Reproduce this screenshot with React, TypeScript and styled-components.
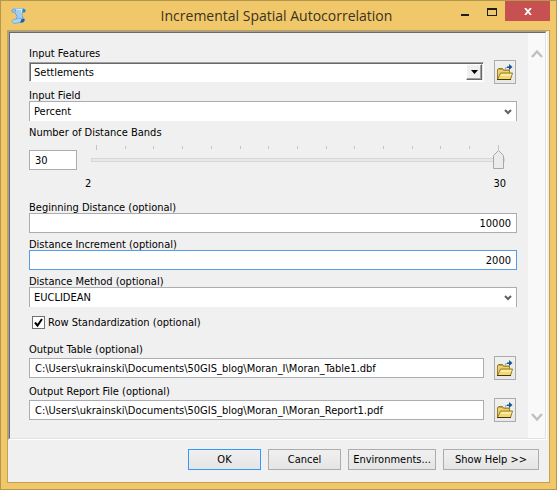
import React, { useState } from "react";
import styled, { createGlobalStyle, css } from "styled-components";

const GlobalStyle = createGlobalStyle`
  * { box-sizing: border-box; }
  body { margin: 0; background: #f0c869; }
  body, button, input, select {
    font-family: "DejaVu Sans Condensed", Tahoma, sans-serif;
    font-size: 11px;
    color: #000;
  }
`;

const Window = styled.main`
  display: flex;
  flex-direction: column;
  min-height: 100vh;
  padding: 0 6px 6px;
  border: 1px solid #b5984f;
  background: #f0c869;
`;

const TitleBar = styled.header`
  display: grid;
  grid-template-columns: 96px 1fr 100px;
  align-items: start;
  height: 29px;
`;

const AppIcon = styled.svg`
  width: 16px;
  height: 16px;
  margin: 7px 0 0 4px;
`;

const Title = styled.h1`
  margin: 0;
  padding-top: 5px;
  font-family: "Open Sans", "Noto Sans", sans-serif;
  font-size: 14px;
  font-weight: 400;
  line-height: 20px;
  text-align: center;
  white-space: nowrap;
  color: #3b3222;
`;

const WindowButtons = styled.div`
  display: flex;
  justify-content: flex-end;
`;

const WindowButton = styled.button<{ $close?: boolean }>`
  display: flex;
  align-items: center;
  justify-content: center;
  width: ${(p) => (p.$close ? "45px" : "27px")};
  height: 20px;
  padding: 1px 0 0;
  border: 0;
  background: ${(p) => (p.$close ? "#c75050" : "transparent")};
`;

const Client = styled.form`
  display: flex;
  flex: 1;
  flex-direction: column;
  border: 1px solid #c3a14f;
  background: #f0f0f0;
`;

const Panel = styled.section`
  display: flex;
  flex: 1;
  margin-right: 2px;
  border: 1px solid;
  border-color: #a0a0a0 #fff #fff #a0a0a0;
`;

const PanelInner = styled.div`
  display: flex;
  flex: 1;
  min-width: 0;
  border: 1px solid;
  border-color: #696969 #e3e3e3 #e3e3e3 #696969;
`;

const Fields = styled.div`
  display: flex;
  flex: 1;
  flex-direction: column;
  gap: 5px;
  min-width: 0;
  padding: 14px 11px 14px 19px;
`;

const ScrollBar = styled.div`
  display: flex;
  flex-direction: column;
  justify-content: space-between;
  width: 17px;
  padding: 16px 0;
  background: #f9f9f9;
`;

const ScrollButton = styled.button`
  display: flex;
  justify-content: center;
  padding: 0;
  border: 0;
  background: none;
`;

const Field = styled.div`
  display: flex;
  flex-direction: column;
`;

const Label = styled.label`
  height: 12px;
  line-height: 14px;
  white-space: nowrap;
`;

const BrowseRow = styled.div`
  display: flex;
  align-items: center;
  gap: 10px;
  height: 24px;
  margin-top: 1px;
`;

const BrowseButton = styled.button`
  display: flex;
  align-items: center;
  justify-content: center;
  width: 22px;
  height: 24px;
  margin-right: 1px;
  padding: 0;
  border: 1px solid #acacac;
  background: linear-gradient(#f0f0f0, #e8e8e8);
`;

const TextBox = styled.input<{ $number?: boolean; $active?: boolean }>`
  flex: 1 0 auto;
  min-width: 0;
  height: 20px;
  padding: 0 5px;
  border: 1px solid ${(p) => (p.$active ? "#569de5" : "#abadb3")};
  border-radius: 0;
  outline: 0;
  background: #fff;
  text-align: ${(p) => (p.$number ? "right" : "left")};
`;

const SelectFrame = styled.div<{ $sunken?: boolean }>`
  position: relative;
  flex: 1;
  height: 20px;
  background: #fff;
  ${(p) =>
    p.$sunken
      ? css`
          border: 1px solid;
          border-color: #a0a0a0 #fff #fff #a0a0a0;
          box-shadow: inset 1px 1px #696969, inset -1px 0 #e3e3e3;
        `
      : css`
          flex: none;
          border: solid #abadb3;
          border-width: 1px 1px 0;
        `}
`;

const Select = styled.select`
  display: block;
  width: 100%;
  height: 100%;
  padding: 0 20px 0 4px;
  border: 0;
  outline: 0;
  background: transparent;
  appearance: none;
`;

const RaisedArrow = styled.span`
  position: absolute;
  top: 1px;
  right: 1px;
  bottom: 1px;
  display: flex;
  align-items: center;
  justify-content: center;
  width: 16px;
  border: 1px solid;
  border-color: #fff #696969 #696969 #fff;
  box-shadow: inset -1px -1px #a0a0a0;
  background: #f0f0f0;
  pointer-events: none;
`;

const FlatArrow = styled.span`
  position: absolute;
  top: 0;
  right: 4px;
  bottom: 0;
  display: flex;
  align-items: center;
  pointer-events: none;
`;

const SliderRow = styled.div`
  display: flex;
  align-items: flex-start;
  gap: 8px;
  height: 58px;
`;

const BandCount = styled.input`
  width: 48px;
  height: 20px;
  margin-top: 12px;
  padding: 0 5px;
  border: 1px solid #abadb3;
  border-radius: 0;
  background: #fff;
`;

const Slider = styled.div`
  display: flex;
  flex: 1;
  flex-direction: column;
  padding: 7px 12px 0 0;
`;

const Ticks = styled.div`
  display: flex;
  align-items: center;
  justify-content: space-between;
  height: 5px;
  margin: 0 6px 0 11px;
`;

const Tick = styled.span<{ $end: boolean }>`
  width: 1px;
  height: ${(p) => (p.$end ? "5px" : "3px")};
  background: #c4c4c4;
`;

const thumbImage = `url("data:image/svg+xml,%3Csvg xmlns='http://www.w3.org/2000/svg' width='11' height='19'%3E%3Cpath d='M.5 5.5l5-5 5 5v13H.5z' fill='%23ebebeb' stroke='%23a8a8a8'/%3E%3C/svg%3E")`;

const Range = styled.input`
  height: 19px;
  margin: 0 0 0 6px;
  outline: 0;
  background: transparent;
  appearance: none;
  &::-webkit-slider-runnable-track {
    height: 4px;
    border: 1px solid #d6d6d6;
    background: #e7eaea;
  }
  &::-webkit-slider-thumb {
    width: 11px;
    height: 19px;
    margin-top: -9px;
    border: 0;
    appearance: none;
    background: ${thumbImage};
  }
`;

const Limits = styled.div`
  display: flex;
  justify-content: space-between;
  margin-top: 8px;
  margin-right: -1px;
  line-height: 14px;
`;

const CheckRow = styled.label`
  display: flex;
  align-items: center;
  gap: 3px;
  height: 13px;
  margin: 4px 0 9px 3px;
  line-height: 14px;
`;

const CheckFrame = styled.span`
  display: grid;
  width: 13px;
  height: 13px;
  > * { grid-area: 1 / 1; }
  > svg { pointer-events: none; }
  input:not(:checked) + svg { visibility: hidden; }
`;

const CheckBox = styled.input`
  width: 13px;
  height: 13px;
  margin: 0;
  border: 1px solid #707070;
  background: #fff;
  appearance: none;
`;

const Footer = styled.footer`
  display: flex;
  justify-content: flex-end;
  gap: 7px;
  padding: 9px 10px 12px;
`;

const Button = styled.button<{ $primary?: boolean }>`
  min-width: 73px;
  height: 21px;
  padding: 0 3px;
  border: 1px solid ${(p) => (p.$primary ? "#3399ff" : "#acacac")};
  background: linear-gradient(#f0f0f0, #e5e5e5);
  white-space: nowrap;
`;

const WideButton = styled(Button)`
  min-width: 88px;
`;

const HelpButton = styled(Button)`
  min-width: 96px;
`;

const ScriptIcon = () => (
  <AppIcon viewBox="0 0 16 16" aria-hidden="true">
    <path d="M2.500.5H13L11 4v4l1.500 5-8 1.500L5.500 9 4 4.500H2.500z" fill="#d9edfc" />
    <path d="M2.500 1C0 1 .3 4.600 2.500 4.500L4.500 4V1.500z" fill="#8fc3ef" stroke="#5a9ad6" strokeWidth=".7" />
    <path d="M3 .6h9.500" stroke="#8fc0ea" />
    <path d="M12 .5c3 0 3.500 4 1 4h-1.800c0-2 .2-3 .8-4z" fill="#2f7fca" />
    <path d="M5 3h5M5 5h5M5.500 7h4.500M6 9h4.500" stroke="#6fa9dc" />
    <path d="M4 4.500L6 8.500 5 12M11 4.500V8l1.500 3" fill="none" stroke="#4a8dcc" strokeWidth=".8" />
    <path d="M2.500 11.500L11 10c3-.5 3.500 3 1 4l-8 1.400C.8 15.500.3 12 2.500 11.500z" fill="#aad4f5" stroke="#5b9cd8" strokeWidth=".7" />
    <path d="M10.500 11c3.500-1.500 4 2 1.500 3.200l-3 .6z" fill="#1b62ab" />
  </AppIcon>
);

const FolderIcon = () => (
  <svg width="18" height="18" viewBox="0 0 18 18" aria-hidden="true">
    <path d="M1.500 16.500V6.500l1-1h4l1 1.500h6v3" fill="#c9a63a" stroke="#9b7d1c" />
    <path d="M2 15V7h4.500l1 1H13v2H5z" fill="#ead17b" />
    <path d="M1.500 16.500l3-6.500h12l-2 6.500z" fill="#f2d875" stroke="#9b7d1c" />
    <path d="M5.500 11h10l-.6 2H4.600z" fill="#f9eca6" />
    <path d="M1 16.500h14" stroke="#4a360b" />
    <path d="M9.500 6.500V4.500h2" fill="none" stroke="#8fb0cb" />
    <path d="M11 3.500h2V1l3.500 3-3.500 3V5h-2z" fill="#15558f" />
  </svg>
);

const Chevron = () => (
  <svg width="8" height="6" viewBox="0 0 8 6" aria-hidden="true">
    <path d="M1 1l3 3 3-3" fill="none" stroke="#606060" strokeWidth="2" />
  </svg>
);

const Browse = ({ label }: { label: string }) => (
  <BrowseButton type="button" aria-label={label}>
    <FolderIcon />
  </BrowseButton>
);

const PathField = ({ id, label, value }: { id: string; label: string; value: string }) => (
  <Field>
    <Label htmlFor={id}>{label}</Label>
    <BrowseRow>
      <TextBox id={id} defaultValue={value} />
      <Browse label={`Browse ${label}`} />
    </BrowseRow>
  </Field>
);

const NumberField = ({ id, label, value, active }: { id: string; label: string; value: string; active?: boolean }) => (
  <Field>
    <Label htmlFor={id}>{label}</Label>
    <TextBox id={id} defaultValue={value} $number $active={active} />
  </Field>
);

const SelectField = ({ id, label, value }: { id: string; label: string; value: string }) => (
  <Field>
    <Label htmlFor={id}>{label}</Label>
    <SelectFrame>
      <Select id={id}>
        <option>{value}</option>
      </Select>
      <FlatArrow>
        <Chevron />
      </FlatArrow>
    </SelectFrame>
  </Field>
);

const tickCount = 15;

export default function App() {
  const [bands, setBands] = useState("30");
  return (
    <>
      <GlobalStyle />
      <Window>
        <TitleBar>
          <ScriptIcon />
          <Title>Incremental Spatial Autocorrelation</Title>
          <WindowButtons>
            <WindowButton type="button" aria-label="Minimize">
              <svg width="8" height="10" aria-hidden="true">
                <path d="M0 7h8v2H0z" fill="#1e1e1e" />
              </svg>
            </WindowButton>
            <WindowButton type="button" aria-label="Maximize">
              <svg width="10" height="8" aria-hidden="true">
                <path d="M0 0h10v8H0zM1 2v5h8V2z" fill="#1e1e1e" fillRule="evenodd" />
              </svg>
            </WindowButton>
            <WindowButton type="button" aria-label="Close" $close>
              <svg width="8" height="7" viewBox="0 0 8 7" aria-hidden="true">
                <path d="M1 0l6 7M7 0L1 7" stroke="#fff" strokeWidth="1.800" />
              </svg>
            </WindowButton>
          </WindowButtons>
        </TitleBar>
        <Client onSubmit={(e) => e.preventDefault()}>
          <Panel>
            <PanelInner>
              <Fields>
                <Field>
                  <Label htmlFor="features">Input Features</Label>
                  <BrowseRow>
                    <SelectFrame $sunken>
                      <Select id="features">
                        <option>Settlements</option>
                      </Select>
                      <RaisedArrow>
                        <svg width="7" height="4" aria-hidden="true">
                          <path d="M0 0h7L3.500 4z" />
                        </svg>
                      </RaisedArrow>
                    </SelectFrame>
                    <Browse label="Browse Input Features" />
                  </BrowseRow>
                </Field>
                <SelectField id="field" label="Input Field" value="Percent" />
                <Field>
                  <Label htmlFor="bands">Number of Distance Bands</Label>
                  <SliderRow>
                    <BandCount id="bands" value={bands} onChange={(e) => setBands(e.target.value)} />
                    <Slider>
                      <Ticks>
                        {Array.from({ length: tickCount }, (_, i) => (
                          <Tick key={i} $end={i === 0 || i === tickCount - 1} />
                        ))}
                      </Ticks>
                      <Range
                        type="range"
                        min={2}
                        max={30}
                        value={bands}
                        aria-label="Number of Distance Bands"
                        onChange={(e) => setBands(e.target.value)}
                      />
                      <Limits>
                        <span>2</span>
                        <span>30</span>
                      </Limits>
                    </Slider>
                  </SliderRow>
                </Field>
                <NumberField id="beginning" label="Beginning Distance (optional)" value="10000" />
                <NumberField id="increment" label="Distance Increment (optional)" value="2000" active />
                <SelectField id="method" label="Distance Method (optional)" value="EUCLIDEAN" />
                <CheckRow>
                  <CheckFrame>
                    <CheckBox type="checkbox" defaultChecked />
                    <svg width="13" height="13" aria-hidden="true">
                      <path d="M3 6.500l2.500 3L10 3" fill="none" stroke="#000" strokeWidth="2" />
                    </svg>
                  </CheckFrame>
                  Row Standardization (optional)
                </CheckRow>
                <PathField
                  id="table"
                  label="Output Table (optional)"
                  value="C:\Users\ukrainski\Documents\50GIS_blog\Moran_I\Moran_Table1.dbf"
                />
                <PathField
                  id="report"
                  label="Output Report File (optional)"
                  value="C:\Users\ukrainski\Documents\50GIS_blog\Moran_I\Moran_Report1.pdf"
                />
              </Fields>
              <ScrollBar>
                <ScrollButton type="button" aria-label="Scroll up">
                  <svg width="12" height="10" aria-hidden="true">
                    <path d="M1 8l5-5.500L11 8" fill="none" stroke="#c0c0c0" strokeWidth="2.500" />
                  </svg>
                </ScrollButton>
                <ScrollButton type="button" aria-label="Scroll down">
                  <svg width="12" height="10" aria-hidden="true">
                    <path d="M1 2l5 5.500L11 2" fill="none" stroke="#c0c0c0" strokeWidth="2.500" />
                  </svg>
                </ScrollButton>
              </ScrollBar>
            </PanelInner>
          </Panel>
          <Footer>
            <Button $primary>OK</Button>
            <Button type="button">Cancel</Button>
            <WideButton type="button">Environments...</WideButton>
            <HelpButton type="button">Show Help &gt;&gt;</HelpButton>
          </Footer>
        </Client>
      </Window>
    </>
  );
}
